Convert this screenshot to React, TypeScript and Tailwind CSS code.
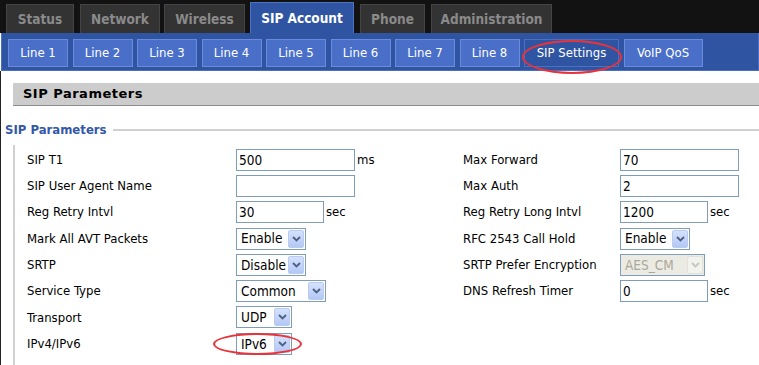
import React from 'react';

const TOP_TABS = [
  { label: 'Status', w: 'w-[68px]', ml: 'ml-[6px]' },
  { label: 'Network', w: 'w-[80px]', ml: 'ml-[6px]' },
  { label: 'Wireless', w: 'w-[81px]', ml: 'ml-[4px]' },
  { label: 'SIP Account', w: 'w-[104px]', ml: 'ml-[5px]', active: true },
  { label: 'Phone', w: 'w-[65px]', ml: 'ml-[6px]' },
  { label: 'Administration', w: 'w-[121px]', ml: 'ml-[6px]' },
];

const SUB_TABS = [
  { label: 'Line 1', w: 'w-[60px]' },
  { label: 'Line 2', w: 'w-[60px]' },
  { label: 'Line 3', w: 'w-[60px]' },
  { label: 'Line 4', w: 'w-[60px]' },
  { label: 'Line 5', w: 'w-[60px]' },
  { label: 'Line 6', w: 'w-[60px]' },
  { label: 'Line 7', w: 'w-[60px]' },
  { label: 'Line 8', w: 'w-[60px]' },
  { label: 'SIP Settings', w: 'w-[95px]', active: true },
  { label: 'VoIP QoS', w: 'w-[79px]' },
];

const FONT = "font-['DejaVu_Sans_Condensed','DejaVu_Sans',sans-serif]";

function TextBox({ value, w }: { value: string; w: string }) {
  return (
    <div className={`${w} h-[22px] border border-[#7f9db9] bg-white flex items-center pl-[2px] text-[13.5px] text-black`}>
      {value}
    </div>
  );
}

function Chevron({ disabled }: { disabled?: boolean }) {
  return (
    <svg width="9" height="6" viewBox="0 0 9 6">
      <path
        d="M1 1 L4.5 4.5 L8 1"
        fill="none"
        stroke={disabled ? '#c9c7ba' : '#4d6185'}
        strokeWidth="1.8"
      />
    </svg>
  );
}

function Select({ value, w, disabled }: { value: string; w: string; disabled?: boolean }) {
  return (
    <div
      className={`${w} h-[22px] border border-[#7f9db9] flex items-center justify-between pl-[4px] pr-[1px] text-[13.5px] ${
        disabled ? 'bg-[#ebebe4] text-[#aca899]' : 'bg-white text-black'
      }`}
    >
      <span>{value}</span>
      <span
        className={`w-[16px] h-[18px] flex items-center justify-center rounded-[2px] border ${
          disabled
            ? 'bg-[#f2f2ee] border-[#e2e1da]'
            : 'bg-gradient-to-b from-[#d5e1fc] to-[#b4c8f6] border-[#b9cbf2]'
        }`}
      >
        <Chevron disabled={disabled} />
      </span>
    </div>
  );
}

function Unit({ children }: { children: React.ReactNode }) {
  return <span className="ml-[2px] text-[13px] text-black">{children}</span>;
}

type Cell = { label: string; field: React.ReactNode } | null;

const ROWS: [Cell, Cell][] = [
  [
    { label: 'SIP T1', field: <><TextBox value="500" w="w-[119px]" /><Unit>ms</Unit></> },
    { label: 'Max Forward', field: <TextBox value="70" w="w-[119px]" /> },
  ],
  [
    { label: 'SIP User Agent Name', field: <TextBox value="" w="w-[119px]" /> },
    { label: 'Max Auth', field: <TextBox value="2" w="w-[119px]" /> },
  ],
  [
    { label: 'Reg Retry Intvl', field: <><TextBox value="30" w="w-[88px]" /><Unit>sec</Unit></> },
    { label: 'Reg Retry Long Intvl', field: <><TextBox value="1200" w="w-[88px]" /><Unit>sec</Unit></> },
  ],
  [
    { label: 'Mark All AVT Packets', field: <Select value="Enable" w="w-[70px]" /> },
    { label: 'RFC 2543 Call Hold', field: <Select value="Enable" w="w-[70px]" /> },
  ],
  [
    { label: 'SRTP', field: <Select value="Disable" w="w-[70px]" /> },
    { label: 'SRTP Prefer Encryption', field: <Select value="AES_CM" w="w-[85px]" disabled /> },
  ],
  [
    { label: 'Service Type', field: <Select value="Common" w="w-[90px]" /> },
    { label: 'DNS Refresh Timer', field: <><TextBox value="0" w="w-[88px]" /><Unit>sec</Unit></> },
  ],
  [{ label: 'Transport', field: <Select value="UDP" w="w-[56px]" /> }, null],
  [{ label: 'IPv4/IPv6', field: <Select value="IPv6" w="w-[56px]" /> }, null],
];

export default function App() {
  return (
    <div className={`relative w-[759px] h-[365px] overflow-hidden bg-white ${FONT}`}>
      {/* Top tabs */}
      <div className="h-[33px] bg-[#121212] flex items-end">
        {TOP_TABS.map((t) => (
          <div
            key={t.label}
            className={`${t.w} ${t.ml} flex items-center justify-center font-bold text-[13.5px] border border-b-0 ${
              t.active
                ? 'h-[31px] bg-[#2f55a2] border-[#4d72c6] text-white'
                : 'h-[29px] bg-[#333333] border-[#444444] text-[#8a8a8a]'
            }`}
          >
            {t.label}
          </div>
        ))}
      </div>

      {/* Sub tabs */}
      <div className="h-[38px] ml-[1px] bg-[#2f55a2] border border-t-0 border-[#4a6fc4] flex items-start pt-[6px] pl-[6px] gap-[4.5px]">
        {SUB_TABS.map((t) => (
          <div
            key={t.label}
            className={`${t.w} h-[28px] flex items-center justify-center text-[13px] text-white border ${
              t.active ? 'bg-[#2f55a2] border-[#4b6fc2]' : 'bg-[#4a6fc8] border-[#6a8bd9]'
            }`}
          >
            {t.label}
          </div>
        ))}
      </div>

      {/* Content */}
      <div className="h-[294px] border-l border-[#222222] flex flex-col">
        <div className="mt-[12px] ml-[12px] h-[23px] bg-[#cccccc] border-b border-[#8e8e8e] flex items-center pl-[10px] font-['DejaVu_Sans',sans-serif] font-bold text-[13px] tracking-[0.5px] text-black">
          SIP Parameters
        </div>

        <div className="mt-[14px] ml-[4px] flex items-center">
          <span className="font-bold text-[13px] text-[#3458a9]">SIP Parameters</span>
          <div className="flex-1 ml-[6px] h-[2px] bg-[#d0d0d0]" />
        </div>

        <div className="ml-[12px] mt-[5px] flex-1 border-l-2 border-[#d0d0d0] pl-[12px] pt-[2px]">
          {ROWS.map((row, i) => (
            <div key={i} className="h-[26.3px] flex items-center text-[13px] text-black">
              <div className="w-[209px]">{row[0]?.label}</div>
              <div className="w-[227px] flex items-center">{row[0]?.field}</div>
              <div className="w-[157px]">{row[1]?.label}</div>
              <div className="flex items-center">{row[1]?.field}</div>
            </div>
          ))}
        </div>
      </div>

      {/* Red annotation ellipses */}
      <div className="absolute left-[522px] top-[40px] w-[100px] h-[34px] rounded-[50%] border-[2.5px] border-[#e8333b]" />
      <div className="absolute left-[213px] top-[333px] w-[89px] h-[22px] rounded-[50%] border-[2.5px] border-[#e8333b]" />
    </div>
  );
}
